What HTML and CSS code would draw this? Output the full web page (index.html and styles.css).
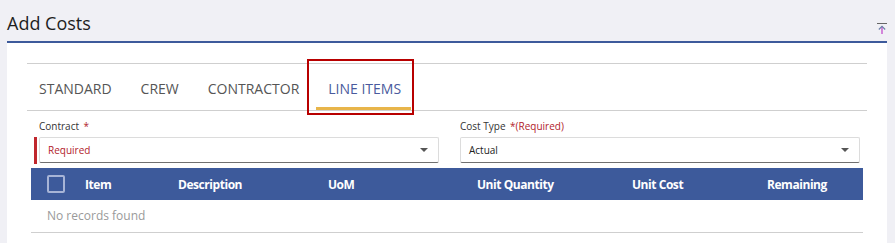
FILE: index.html
```html
<!DOCTYPE html>
<html>
<head>
<meta charset="utf-8">
<link rel="stylesheet" href="styles.css">
</head>
<body>
<div class="page">
  <div class="header">
    <h1 class="title">Add Costs</h1>
    <span class="collapse-icon">
      <svg width="10" height="11" viewBox="0 0 10 11">
        <rect x="0" y="0" width="10" height="1" fill="#666"/>
        <path d="M5 3.5 V11" stroke="#c03fc8" stroke-width="1.2"/>
        <path d="M1.8 6.5 L5 3.3 L8.2 6.5" stroke="#6a7fa8" stroke-width="1.1" fill="none"/>
      </svg>
    </span>
  </div>
  <div class="panel">
    <div class="content">
      <div class="tabs">
        <div class="tab">STANDARD</div>
        <div class="tab">CREW</div>
        <div class="tab">CONTRACTOR</div>
        <div class="tab active">LINE ITEMS</div>
      </div>
      <div class="highlight"></div>
      <div class="form">
        <div class="field">
          <label class="label">Contract <span class="req">*</span></label>
          <div class="select invalid">
            <span class="placeholder">Required</span>
            <span class="caret"></span>
          </div>
        </div>
        <div class="field">
          <label class="label">Cost Type <span class="req">*(Required)</span></label>
          <div class="select">
            <span class="value">Actual</span>
            <span class="caret"></span>
          </div>
        </div>
      </div>
      <div class="table">
        <div class="thead">
          <div class="th th-check"><span class="checkbox"></span></div>
          <div class="th">Item</div>
          <div class="th">Description</div>
          <div class="th">UoM</div>
          <div class="th">Unit Quantity</div>
          <div class="th">Unit Cost</div>
          <div class="th">Remaining</div>
        </div>
        <div class="empty">No records found</div>
      </div>
    </div>
  </div>
</div>
</body>
</html>
```
FILE: styles.css
```css
html, body {
  margin: 0;
  padding: 0;
}
body {
  background: #f0f0f5;
  font-family: "Open Sans", "Liberation Sans", sans-serif;
  width: 895px;
  height: 243px;
  overflow: hidden;
}
.page {
  width: 880px;
  margin-left: 7px;
}
.header {
  height: 41px;
  box-sizing: border-box;
  padding-top: 11px;
  display: flex;
  justify-content: space-between;
  align-items: flex-start;
}
.title {
  margin: 0;
  font-size: 18px;
  line-height: 24px;
  font-weight: 400;
  color: #1e1e1e;
}
.collapse-icon {
  display: block;
  margin-top: 12px;
  width: 10px;
  height: 11px;
}
.collapse-icon svg { display: block; }
.panel {
  background: #fff;
  border-top: 2px solid #3d5a9b;
  height: 210px;
  position: relative;
}
.content {
  padding: 20px 20px 0 20px;
  position: relative;
}
.tabs {
  display: flex;
  gap: 5px;
  border-top: 1px solid #cfcfcf;
  border-bottom: 1px solid #cfcfcf;
}
.tab {
  padding: 15px 12px 8px 12px;
  line-height: 20px;
  font-size: 14px;
  color: #555;
  border-bottom: 3px solid transparent;
}
.tab.active {
  color: #4a5a9d;
  border-bottom-color: #e8b54a;
  padding-right: 10px;
}
.highlight {
  position: absolute;
  left: 300px;
  top: 16px;
  width: 103px;
  height: 52px;
  border: 2px solid #b80000;
}
.form {
  display: grid;
  grid-template-columns: 400px 400px;
  column-gap: 21px;
  padding-left: 12px;
  margin-top: 8px;
}
.label {
  display: block;
  font-size: 10px;
  line-height: 14px;
  color: #333;
  margin-bottom: 4px;
}
.req {
  color: #b2232b;
  margin-left: 2px;
}
.select {
  position: relative;
  height: 26px;
  box-sizing: border-box;
  border: 1px solid #dcdcdc;
  border-bottom: 1px solid #707070;
  border-radius: 2px;
  display: flex;
  align-items: center;
  padding: 0 8px;
  font-size: 10px;
}
.select.invalid::before {
  content: "";
  position: absolute;
  left: -6px;
  top: -1px;
  width: 3px;
  height: 27px;
  background: #c0272d;
}
.placeholder { color: #b2232b; }
.value { color: #222; }
.caret {
  margin-left: auto;
  width: 0;
  height: 0;
  border-left: 4px solid transparent;
  border-right: 4px solid transparent;
  border-top: 4px solid #555;
  margin-right: 2px;
}
.table {
  margin: 5px 4px 0 4px;
  border-bottom: 1px solid #cfcfcf;
}
.thead {
  display: grid;
  grid-template-columns: 54px 93px 150px 149px 155px 135px 96px;
  height: 32px;
  background: #3d5a9b;
  align-items: center;
}
.th {
  color: #fff;
  font-weight: 700;
  font-size: 12px;
  letter-spacing: -0.45px;
}
.th-check {
  padding-left: 16px;
  display: flex;
}
.checkbox {
  display: block;
  width: 18px;
  height: 18px;
  box-sizing: border-box;
  border: 2px solid #a7b4d6;
  border-radius: 2px;
}
.empty {
  height: 32px;
  line-height: 32px;
  padding-left: 16px;
  font-size: 12px;
  color: #9a9a9a;
}
```
